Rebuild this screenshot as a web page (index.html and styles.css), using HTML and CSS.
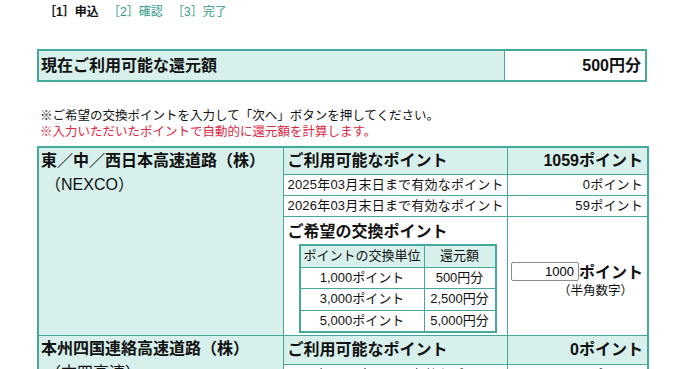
FILE: index.html
```html
<!DOCTYPE html>
<html lang="ja">
<head>
    <meta charset="UTF-8">
    <title>ポイント交換 申込</title>
    <link rel="stylesheet" href="styles.css">
</head>
<body>
    <div class="steps">
        <span class="step current">［1］申込</span>
        <span class="step">［2］確認</span>
        <span class="step">［3］完了</span>
    </div>

    <div class="page">
        <table class="total">
            <tr>
                <th>現在ご利用可能な還元額</th>
                <td>500円分</td>
            </tr>
        </table>

        <p class="note">※ご希望の交換ポイントを入力して「次へ」ボタンを押してください。</p>
        <p class="note red">※入力いただいたポイントで自動的に還元額を計算します。</p>

        <table class="points">
            <colgroup>
                <col class="c-company">
                <col class="c-label">
                <col class="c-value">
            </colgroup>
            <tr class="head">
                <th rowspan="4" class="company">東／中／西日本高速道路（株）<span class="sub">（NEXCO）</span></th>
                <th class="label">ご利用可能なポイント</th>
                <td class="value big">1059ポイント</td>
            </tr>
            <tr class="small">
                <td class="label">2025年03月末日まで有効なポイント</td>
                <td class="value">0ポイント</td>
            </tr>
            <tr class="small">
                <td class="label">2026年03月末日まで有効なポイント</td>
                <td class="value">59ポイント</td>
            </tr>
            <tr class="exchange">
                <td class="label">
                    <div class="ex-title">ご希望の交換ポイント</div>
                    <table class="rate">
                        <tr>
                            <th>ポイントの交換単位</th>
                            <th>還元額</th>
                        </tr>
                        <tr><td>1,000ポイント</td><td>500円分</td></tr>
                        <tr><td>3,000ポイント</td><td>2,500円分</td></tr>
                        <tr><td>5,000ポイント</td><td>5,000円分</td></tr>
                    </table>
                </td>
                <td class="input-cell">
                    <div class="input-row">
                        <input type="text" class="pt-input" value="1000"><span class="unit">ポイント</span>
                    </div>
                    <div class="hint">（半角数字）</div>
                </td>
            </tr>
            <tr class="head">
                <th rowspan="2" class="company">本州四国連絡高速道路（株）<span class="sub">（本四高速）</span></th>
                <th class="label">ご利用可能なポイント</th>
                <td class="value big">0ポイント</td>
            </tr>
            <tr class="small">
                <td class="label">2025年03月末日まで有効なポイント</td>
                <td class="value">0ポイント</td>
            </tr>
        </table>
    </div>
</body>
</html>
```

FILE: styles.css
```css
body {
    margin: 0;
    padding: 0;
    background-color: #ffffff;
    color: #111111;
    font-family: "Liberation Sans", "Noto Sans CJK JP", sans-serif;
}
.steps {
    padding: 4px 0 0 44px;
    font-size: 12px;
    line-height: 17px;
    color: #2f9a8c;
}
.step {
    margin-right: 6px;
}
.step.current {
    color: #111111;
    font-weight: bold;
}
.page {
    width: 610px;
    margin: 0 0 0 37px;
    padding-top: 28px;
}
table {
    border-collapse: collapse;
}
.total {
    width: 610px;
    border: 2px solid #45a89d;
    font-size: 16px;
    line-height: 19px;
    font-weight: bold;
}
.total th {
    text-align: left;
    background-color: #d7f0eb;
    padding: 5px 3px 5px 2px;
    border-right: 1px solid #45a89d;
}
.total td {
    width: 132px;
    text-align: right;
    padding: 5px 4px;
}
.note {
    margin: 0;
    padding-left: 3px;
    font-size: 12.5px;
    line-height: 16px;
}
.total + .note {
    margin-top: 26px;
}
.red {
    color: #e0263f;
    margin-bottom: 6px;
}
.points {
    width: 610px;
    table-layout: fixed;
    border: 2px solid #45a89d;
    white-space: nowrap;
}
.c-company { width: 245px; }
.c-label { width: 224px; }
.c-value { width: 141px; }
.points td, .points th {
    border: 1px solid #45a89d;
    padding: 0 4px;
}
.company {
    background-color: #d7f0eb;
    text-align: left;
    vertical-align: top;
    font-size: 16px;
    line-height: 24px;
    padding: 1px 2px !important;
}
.company .sub {
    display: block;
    font-weight: normal;
    padding-left: 4px;
}
.head .label, .head .value {
    background-color: #d7f0eb;
    font-size: 16px;
    line-height: 26px;
    font-weight: bold;
    text-align: left;
}
.head .value {
    text-align: right;
}
.small td {
    font-size: 13px;
    letter-spacing: 0.2px;
    line-height: 20px;
}
.value {
    text-align: right;
}
.exchange .label {
    vertical-align: top;
    padding: 3px 4px 2px 4px;
}
.ex-title {
    font-size: 16px;
    line-height: 23px;
    font-weight: bold;
}
.rate {
    margin: 1px 0 0 11px;
    border: 2px solid #45a89d;
    font-size: 13px;
}
.rate th, .rate td {
    border: 1px solid #45a89d;
    text-align: center;
    line-height: 20.5px;
    padding: 0 3px;
}
.rate th {
    background-color: #d7f0eb;
    font-weight: normal;
    width: 117px;
}
.rate th + th {
    width: 64px;
}
.input-cell {
    text-align: right;
    vertical-align: middle;
    padding-top: 6px !important;
}
.input-row {
    display: flex;
    align-items: center;
    justify-content: flex-end;
}
.pt-input {
    width: 58px;
    height: 17px;
    padding: 0 4px;
    border: 1px solid #8a8a8a;
    border-radius: 2px;
    font-family: "Liberation Sans", sans-serif;
    font-size: 13px;
    text-align: right;
}
.unit {
    font-size: 16px;
    font-weight: bold;
}
.hint {
    font-size: 12.5px;
    line-height: 16px;
    padding-right: 10px;
}
```
